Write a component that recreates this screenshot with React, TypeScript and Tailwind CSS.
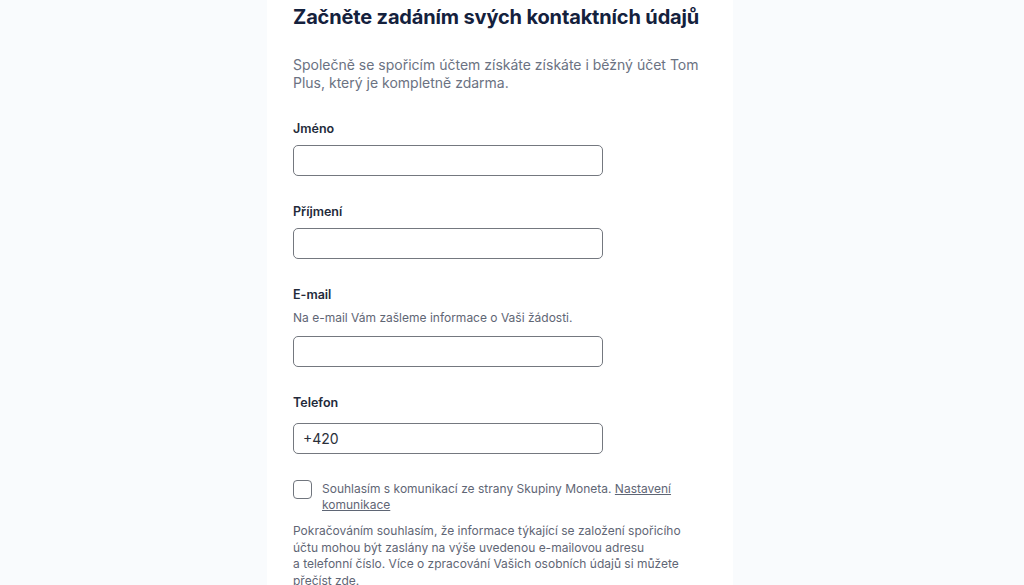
const font = { fontFamily: "Inter, 'Noto Sans', sans-serif" };

function Field({
  label,
  hint,
  value,
  gap,
}: {
  label: string;
  hint?: string;
  value?: string;
  gap: string;
}) {
  return (
    <div className="flex flex-col">
      <label className="text-[12.5px] font-semibold leading-[18px] text-[#232a3a]">{label}</label>
      {hint && (
        <p className="mt-[5px] text-[12px] leading-[18px] text-[#5f6675]">{hint}</p>
      )}
      <input
        type="text"
        defaultValue={value}
        className={`${gap} h-[31px] w-[310px] rounded-[5px] border border-[#74787f] bg-white px-[9px] text-[14px] text-[#2a2f3a] outline-none`}
      />
    </div>
  );
}

export default function App() {
  return (
    <div className="min-h-[585px] w-full bg-[#f9fbfd]" style={font}>
      <div className="ml-[267px] min-h-[585px] w-[466px] bg-white px-[26px] pt-[3px]">
        <h1 className="text-[20px] font-bold leading-[28px] tracking-[-0.15px] text-[#14213d]">
          Začněte zadáním svých kontaktních údajů
        </h1>
        <p className="mt-[25px] text-[14px] leading-[18px] text-[#6b7282]">
          Společně se spořicím účtem získáte získáte i běžný účet Tom Plus, který je kompletně zdarma.
        </p>

        <div className="mt-[28px] flex flex-col gap-[27px]">
          <Field label="Jméno" gap="mt-[7px]" />
          <Field label="Příjmení" gap="mt-[7px]" />
          <Field
            label="E-mail"
            hint="Na e-mail Vám zašleme informace o Vaši žádosti."
            gap="mt-[9px]"
          />
          <Field label="Telefon" value="+420" gap="mt-[11px]" />
        </div>

        <div className="mt-[26px] flex items-start gap-[10px]">
          <input
            type="checkbox"
            className="mt-0 h-[19px] w-[19px] shrink-0 appearance-none rounded-[4px] border border-[#70757d] bg-white"
          />
          <p className="mt-[1px] text-[12px] leading-[16px] text-[#5f6675]">
            Souhlasím s komunikací ze strany Skupiny Moneta.{" "}
            <a href="#" className="underline">
              Nastavení komunikace
            </a>
          </p>
        </div>

        <p className="mt-[10px] w-[410px] pb-4 text-[12px] leading-[16.5px] text-[#5f6675]">
          Pokračováním souhlasím, že informace týkající se založení spořicího účtu mohou být zaslány na výše uvedenou e-mailovou adresu a{"\u00a0"}telefonní číslo. Více o zpracování Vašich osobních údajů si můžete přečíst zde.
        </p>
      </div>
    </div>
  );
}
